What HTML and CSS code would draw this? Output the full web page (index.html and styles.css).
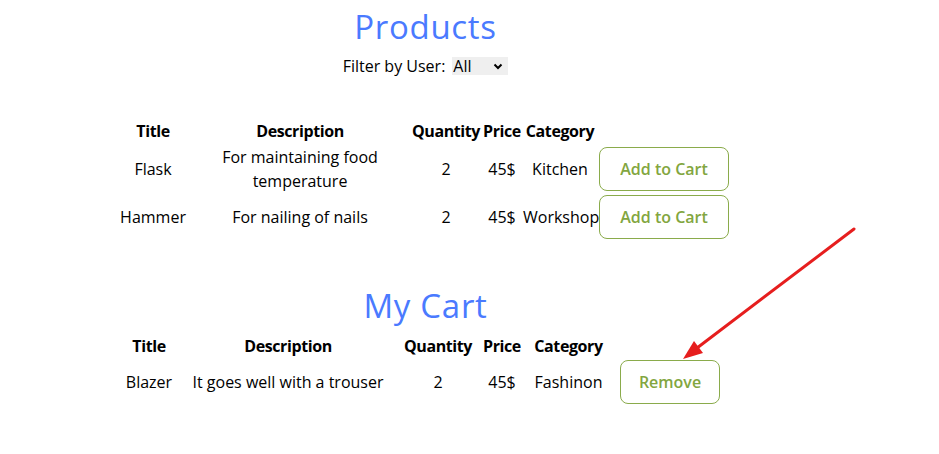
FILE: index.html
```html
<!DOCTYPE html>
<html lang="en">
<head>
<meta charset="utf-8">
<title>Products</title>
<link rel="stylesheet" href="styles.css">
</head>
<body>
<div class="page">
  <h1 class="heading heading-products">Products</h1>
  <div class="filter">
    <label class="filter-label" for="user">Filter by User:</label>
    <span class="select-wrap">
      <select id="user" class="select">
        <option>All</option>
      </select>
      <svg class="select-chevron" width="10" height="7" viewBox="0 0 10 7"><path d="M1.5 1.5 L5 5 L8.5 1.5" fill="none" stroke="#000" stroke-width="2"/></svg>
    </span>
  </div>

  <table class="grid products">
    <thead>
      <tr>
        <th class="p-title">Title</th>
        <th class="p-desc">Description</th>
        <th class="p-qty">Quantity</th>
        <th class="p-price">Price</th>
        <th class="p-cat">Category</th>
        <th class="p-act"></th>
      </tr>
    </thead>
    <tbody>
      <tr>
        <td>Flask</td>
        <td class="wrap">For maintaining food temperature</td>
        <td>2</td>
        <td>45$</td>
        <td>Kitchen</td>
        <td><button class="btn btn-add">Add to Cart</button></td>
      </tr>
      <tr>
        <td>Hammer</td>
        <td class="wrap">For nailing of nails</td>
        <td>2</td>
        <td>45$</td>
        <td>Workshop</td>
        <td><button class="btn btn-add">Add to Cart</button></td>
      </tr>
    </tbody>
  </table>

  <h1 class="heading heading-cart">My Cart</h1>
  <table class="grid cart">
    <thead>
      <tr>
        <th class="c-title">Title</th>
        <th class="c-desc">Description</th>
        <th class="c-qty">Quantity</th>
        <th class="c-price">Price</th>
        <th class="c-cat">Category</th>
        <th class="c-act"></th>
      </tr>
    </thead>
    <tbody>
      <tr>
        <td>Blazer</td>
        <td>It goes well with a trouser</td>
        <td>2</td>
        <td>45$</td>
        <td>Fashinon</td>
        <td><button class="btn btn-remove">Remove</button></td>
      </tr>
    </tbody>
  </table>

  <svg class="annotation" width="939" height="454" viewBox="0 0 939 454">
    <line x1="854" y1="222" x2="697" y2="341" stroke="#e61e1e" stroke-width="3" stroke-linecap="round"/>
    <polygon points="683,352 694,334 703,346" fill="#e61e1e"/>
  </svg>
</div>
</body>
</html>
```
FILE: styles.css
```css
* { box-sizing: border-box; }

body {
  margin: 0;
  font-family: "Open Sans", "Noto Sans", sans-serif;
  font-size: 16px;
  color: #000;
  background: #fff;
}

.page {
  position: relative;
  width: 939px;
  min-height: 454px;
}

.heading {
  width: 851px;
  margin: 0;
  text-align: center;
  font-size: 33px;
  font-weight: 400;
  letter-spacing: 0.7px;
  line-height: 40px;
  color: #4a7aff;
}

.heading-products { margin-top: 7px; }
.heading-cart { margin-top: 45px; }

.filter {
  width: 851px;
  margin-top: 7px;
  display: flex;
  justify-content: center;
  align-items: center;
  gap: 7px;
  line-height: 24px;
  height: 24px;
}

.select-wrap {
  position: relative;
  display: inline-block;
  width: 56px;
  height: 18px;
}

.select {
  appearance: none;
  -webkit-appearance: none;
  width: 56px;
  height: 18px;
  border: none;
  border-radius: 0;
  background: #efefef;
  font-family: inherit;
  font-size: 16px;
  line-height: 18px;
  padding: 0 0 0 1px;
  color: #000;
  display: block;
}

.select-chevron {
  position: absolute;
  right: 5px;
  top: 6px;
  pointer-events: none;
}

.grid {
  border-collapse: separate;
  border-spacing: 2px;
  table-layout: fixed;
}

.grid th,
.grid td {
  padding: 0;
  text-align: center;
  vertical-align: middle;
  white-space: nowrap;
  line-height: 24px;
  overflow: visible;
}

.grid th {
  font-weight: 700;
  letter-spacing: -0.4px;
}

.grid td.wrap { white-space: normal; }

.products {
  width: 616px;
  margin: 39px 0 0 115px;
}

.p-title { width: 72px; }
.p-desc { width: 218px; }
.p-qty { width: 70px; }
.p-price { width: 38px; }
.p-cat { width: 74px; }
.p-act { width: 130px; }

.cart {
  width: 611px;
  margin: 6px 0 0 116px;
}

.c-title { width: 62px; }
.c-desc { width: 212px; }
.c-qty { width: 84px; }
.c-price { width: 40px; }
.c-cat { width: 89px; }
.c-act { width: 110px; }

.btn {
  display: block;
  height: 44px;
  margin: 0 auto;
  padding: 0;
  border: 1px solid #8aab4b;
  border-radius: 8px;
  background: #fff;
  color: #82a640;
  font-family: inherit;
  font-size: 16px;
  font-weight: 600;
}

.btn-add { width: 130px; }
.btn-remove { width: 100px; }

.annotation {
  position: absolute;
  top: 0;
  left: 0;
  pointer-events: none;
}
```
